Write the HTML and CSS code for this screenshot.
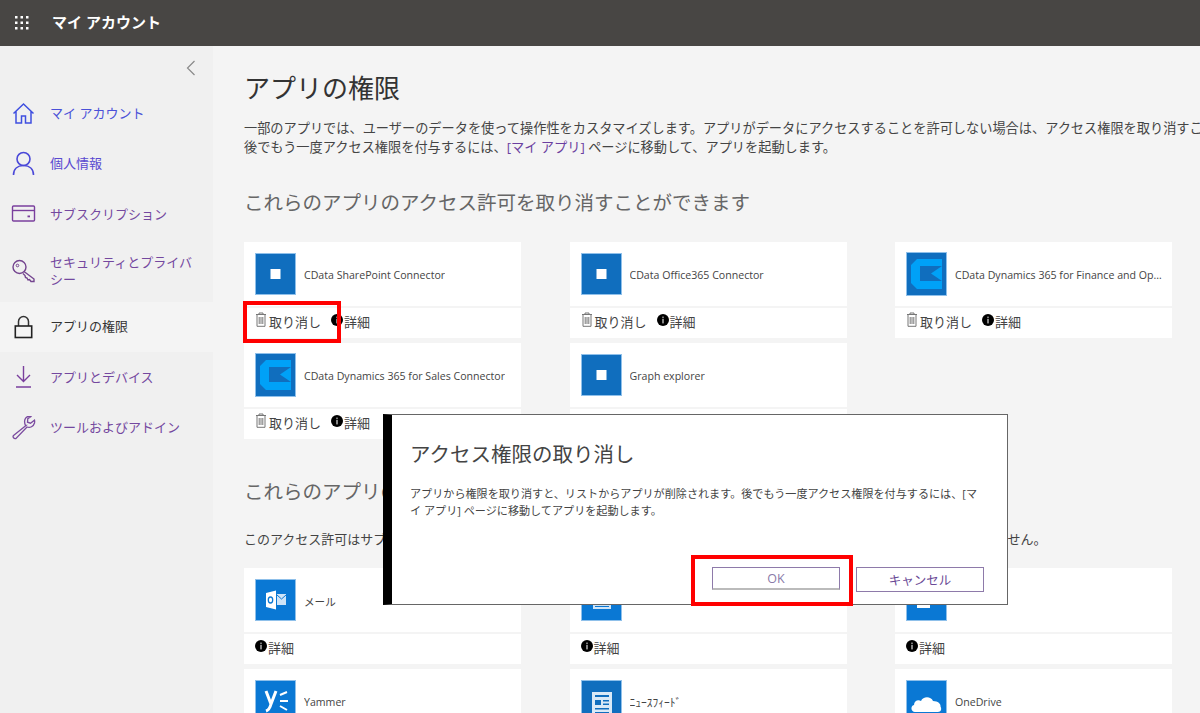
FILE: index.html
```html
<!DOCTYPE html>
<html lang="ja">
<head>
<meta charset="utf-8">
<title>アプリの権限</title>
<link rel="stylesheet" href="styles.css">
</head>
<body>
<svg class="defs" width="0" height="0" aria-hidden="true">
  <symbol id="trash" viewBox="0 0 11 15"><path d="M3.500 2.200V1h4v1.200M.5 2.500h10M1.500 2.500v11.800h8V2.500M3.700 5v7M5.500 5v7M7.300 5v7" fill="none" stroke="#777" stroke-width="1"/></symbol>
  <symbol id="info" viewBox="0 0 12 12"><circle cx="6" cy="6" r="6" fill="#000"/><rect x="5.400" y="2.600" width="1.200" height="1.300" fill="#ddd"/><rect x="5.400" y="4.800" width="1.200" height="4.600" fill="#ddd"/></symbol>
  <symbol id="square" viewBox="0 0 41 42"><rect width="41" height="42" fill="#106ebe"/><rect x="15.500" y="16" width="10" height="10" fill="#fff"/></symbol>
  <symbol id="cdata" viewBox="0 0 41 44"><rect width="41" height="44" fill="#106ebe"/><path d="M11 7H36V14H14V29H36V37H11L5 31V13Z" fill="#00a1f7"/><path d="M36 14V29L25 21.500Z" fill="#00a1f7"/></symbol>
</svg>
<header class="topbar">
  <svg class="waffle" width="16" height="16" viewBox="0 0 16 16"><g fill="#fff"><rect x="1" y="1" width="2.500" height="2.500"/><rect x="6.500" y="1" width="2.500" height="2.500"/><rect x="12" y="1" width="2.500" height="2.500"/><rect x="1" y="6.500" width="2.500" height="2.500"/><rect x="6.500" y="6.500" width="2.500" height="2.500"/><rect x="12" y="6.500" width="2.500" height="2.500"/><rect x="1" y="12" width="2.500" height="2.500"/><rect x="6.500" y="12" width="2.500" height="2.500"/><rect x="12" y="12" width="2.500" height="2.500"/></g></svg>
  <span class="brand">マイ アカウント</span>
</header>
<div class="shell">
  <nav class="sidebar">
    <div class="collapse"><svg width="10" height="16" viewBox="0 0 10 16"><path d="M8.500 1L1.500 8l7 7" fill="none" stroke="#8a8a8a" stroke-width="1.200"/></svg></div>
    <a class="nav-item c-blue"><svg class="nav-icon" width="24" height="24" viewBox="0 0 24 24"><path d="M2 12.500L12 3l10 9.500M4.500 10.500V22h5.500v-7h4v7h5.500V10.500" fill="none" stroke="#3f4fe0" stroke-width="1.500"/></svg><span>マイ アカウント</span></a>
    <a class="nav-item c-indigo"><svg class="nav-icon" width="24" height="26" viewBox="0 0 24 26"><circle cx="12" cy="8" r="6.500" fill="none" stroke="#4a48d8" stroke-width="1.600"/><path d="M2 24c0-6 4-9.500 10-9.500s10 3.500 10 9.500" fill="none" stroke="#4a48d8" stroke-width="1.600"/></svg><span>個人情報</span></a>
    <a class="nav-item c-purple"><svg class="nav-icon" width="24" height="18" viewBox="0 0 24 18"><rect x="1" y="1" width="22" height="15" rx="1" fill="none" stroke="#7a3f9d" stroke-width="1.400"/><path d="M1 5.500h22" stroke="#7a3f9d" stroke-width="1.400"/><rect x="16" y="10.500" width="2.500" height="1.800" fill="#7a3f9d"/></svg><span>サブスクリプション</span></a>
    <a class="nav-item nav-tall c-purple"><svg class="nav-icon" width="24" height="24" viewBox="0 0 24 24"><circle cx="8" cy="8" r="6.500" fill="none" stroke="#74448f" stroke-width="1.400"/><circle cx="6" cy="6.500" r="1.300" fill="none" stroke="#74448f" stroke-width="1"/><path d="M12.500 12.500L22.500 20v2.500h-3l-1.500-2-1.500.5-1-2-1.500-.5-.5-2-2-2" fill="none" stroke="#74448f" stroke-width="1.400"/></svg><span>セキュリティとプライバシー</span></a>
    <a class="nav-item nav-active"><svg class="nav-icon" width="24" height="24" viewBox="0 0 24 24"><path d="M7 11V6.500a5 5 0 0110 0V11" fill="none" stroke="#333" stroke-width="1.500"/><rect x="3.800" y="11" width="16.400" height="11.500" fill="none" stroke="#222" stroke-width="1.600"/></svg><span>アプリの権限</span></a>
    <a class="nav-item c-purple"><svg class="nav-icon" width="24" height="24" viewBox="0 0 24 24"><path d="M12 1v15M5.500 10l6.500 6.500 6.500-6.500M4.500 22h15" fill="none" stroke="#7a3f9d" stroke-width="1.400"/></svg><span>アプリとデバイス</span></a>
    <a class="nav-item c-purple"><svg class="nav-icon" width="24" height="24" viewBox="0 0 24 24"><path d="M14.500 9.500L2 19.500c-1 1 0 3.500 2.500 3l11-11.500c3 1.200 6.500-.5 7.500-4 .2-1 .2-2 0-2.800l-4 3-3-1 .3-3.500 3-2c-4-1.500-8 2.500-5.300 8.800z" fill="none" stroke="#7a4a9f" stroke-width="1.300"/></svg><span>ツールおよびアドイン</span></a>
  </nav>
  <main class="content">
    <h1 class="page-title">アプリの権限</h1>
    <p class="intro">一部のアプリでは、ユーザーのデータを使って操作性をカスタマイズします。アプリがデータにアクセスすることを許可しない場合は、アクセス権限を取り消すことができます。<br>後でもう一度アクセス権限を付与するには、<a class="link">[マイ アプリ]</a> ページに移動して、アプリを起動します。</p>
    <h2 class="section-title">これらのアプリのアクセス許可を取り消すことができます</h2>
    <div class="card-grid">
      <article class="card"><div class="card-head"><svg class="app-icon"><use href="#square"/></svg><span class="app-name">CData SharePoint Connector</span></div><div class="card-foot"><span class="act"><svg class="ic-trash"><use href="#trash"/></svg>取り消し</span><span class="act"><svg class="ic-info"><use href="#info"/></svg>詳細</span></div></article>
      <article class="card"><div class="card-head"><svg class="app-icon"><use href="#square"/></svg><span class="app-name">CData Office365 Connector</span></div><div class="card-foot"><span class="act"><svg class="ic-trash"><use href="#trash"/></svg>取り消し</span><span class="act"><svg class="ic-info"><use href="#info"/></svg>詳細</span></div></article>
      <article class="card"><div class="card-head"><svg class="app-icon tall"><use href="#cdata"/></svg><span class="app-name">CData Dynamics 365 for Finance and Operations Connector</span></div><div class="card-foot"><span class="act"><svg class="ic-trash"><use href="#trash"/></svg>取り消し</span><span class="act"><svg class="ic-info"><use href="#info"/></svg>詳細</span></div></article>
      <article class="card"><div class="card-head"><svg class="app-icon tall"><use href="#cdata"/></svg><span class="app-name">CData Dynamics 365 for Sales Connector</span></div><div class="card-foot"><span class="act"><svg class="ic-trash"><use href="#trash"/></svg>取り消し</span><span class="act"><svg class="ic-info"><use href="#info"/></svg>詳細</span></div></article>
      <article class="card"><div class="card-head"><svg class="app-icon"><use href="#square"/></svg><span class="app-name">Graph explorer</span></div><div class="card-foot"></div></article>
    </div>
    <h2 class="section-title second">これらのアプリのアクセス許可は取り消せません</h2>
    <p class="note">このアクセス許可はサブスクリプションの一部として、組織の管理者によって提供されているため、ここでは取り消すことはできません。</p>
    <div class="card-grid">
      <article class="card"><div class="card-head"><svg class="app-icon" viewBox="0 0 41 42"><rect width="41" height="42" fill="#0a78d4"/><path d="M11 14l10-2.500v19L11 28z" fill="#fff"/><path d="M22 15h9v11h-9z" fill="#cfe4f7"/><path d="M22 16l4.500 4 4.500-4" fill="none" stroke="#0a78d4"/><ellipse cx="15.500" cy="21" rx="2.200" ry="3" fill="none" stroke="#0a78d4" stroke-width="1.300"/></svg><span class="app-name">メール</span></div><div class="card-foot"><span class="act"><svg class="ic-info"><use href="#info"/></svg>詳細</span></div></article>
      <article class="card"><div class="card-head"><svg class="app-icon" viewBox="0 0 41 42"><rect width="41" height="42" fill="#0a78d4"/><rect x="12" y="12" width="18" height="18" fill="#cfe4f7"/><path d="M14 27.500h14" stroke="#0a78d4"/></svg></div><div class="card-foot"><span class="act"><svg class="ic-info"><use href="#info"/></svg>詳細</span></div></article>
      <article class="card"><div class="card-head"><svg class="app-icon" viewBox="0 0 41 42"><rect width="41" height="42" fill="#0a78d4"/><rect x="11" y="12" width="13" height="17" fill="#fff"/></svg></div><div class="card-foot"><span class="act"><svg class="ic-info"><use href="#info"/></svg>詳細</span></div></article>
      <article class="card"><div class="card-head"><svg class="app-icon" viewBox="0 0 41 42"><rect width="41" height="42" fill="#0a78d4"/><path d="M11 11l5 13 5-13M16 24c-1 4-2 6-5 7" fill="none" stroke="#fff" stroke-width="3"/><path d="M25 15l7-3M25 21h8M25 26l7 4" stroke="#fff" stroke-width="2"/></svg><span class="app-name">Yammer</span></div></article>
      <article class="card"><div class="card-head"><svg class="app-icon" viewBox="0 0 41 42"><rect width="41" height="42" fill="#106ebe"/><rect x="11" y="12" width="20" height="24" fill="#d9e9f7"/><path d="M14 15h14v2H14zM14 20h6v5h-6zM22 20h6v1.500h-6zM22 23.500h6V25h-6zM14 28h14v1.500H14zM14 32h14v1.500H14z" fill="#106ebe"/></svg><span class="app-name news">ﾆｭｰｽﾌｨｰﾄﾞ</span></div></article>
      <article class="card"><div class="card-head"><svg class="app-icon" viewBox="0 0 41 42"><rect width="41" height="42" fill="#0a78d4"/><path d="M16 32H9c-4 0-5-6-1-7 0-4 4-6 7-4 2-5 10-5 12 0 5 0 8 3 7.500 5.500C36 29 35 32 32 32z" fill="#fff"/></svg><span class="app-name">OneDrive</span></div></article>
    </div>
  </main>
</div>
<section class="dialog" role="dialog">
  <h3 class="dialog-title">アクセス権限の取り消し</h3>
  <p class="dialog-text">アプリから権限を取り消すと、リストからアプリが削除されます。後でもう一度アクセス権限を付与するには、[マイ アプリ] ページに移動してアプリを起動します。</p>
  <div class="dialog-actions">
    <button class="btn btn-ok">OK</button>
    <button class="btn">キャンセル</button>
  </div>
</section>
<div class="mark mark-revoke"></div>
<div class="mark mark-ok"></div>
</body>
</html>
```

FILE: styles.css
```css
* { box-sizing: border-box; }
html, body { margin: 0; height: 100%; }
body {
  width: 1200px;
  height: 713px;
  overflow: hidden;
  position: relative;
  background: #f4f4f4;
  color: #333;
  font-family: "Open Sans", "Noto Sans CJK JP", sans-serif;
  font-size: 12px;
}
.defs { position: absolute; }
.topbar {
  height: 46px;
  background: #484644;
  color: #fff;
  display: flex;
  align-items: center;
  padding-left: 14px;
}
.waffle { flex: none; }
.brand { margin: 0 0 3px 22px; font-size: 15px; font-weight: 700; }
.shell { display: flex; height: 667px; }
.sidebar { width: 213px; flex: none; background: #f0f0f0; display: flex; flex-direction: column; }
.collapse { height: 42px; padding: 14px 0 0 186px; line-height: 0; }
.nav-item {
  height: 50.500px;
  display: flex;
  align-items: center;
  gap: 14px;
  padding: 0 14px 0 11px;
  font-size: 13px;
  line-height: 17px;
  color: #333;
}
.nav-item span { flex: 1; }
.nav-icon { flex: none; width: 25px; }
.nav-tall { height: 62px; }
.nav-active { background: #f4f4f4; }
.c-blue { color: #4a50d8; }
.c-indigo { color: #5a4ad0; }
.c-purple { color: #74489f; }
.content { flex: 1; min-width: 0; padding: 24px 0 0 31px; overflow: hidden; }
.page-title { margin: 0; font-size: 26px; font-weight: 400; line-height: 36px; color: #333; white-space: nowrap; }
.intro { margin: 13px 0 0; width: 1000px; font-size: 13.200px; line-height: 19px; color: #444; white-space: nowrap; }
.link { color: #6b3fa0; }
.section-title { margin: 32px 0 0; font-size: 19.500px; font-weight: 400; line-height: 28px; color: #666; white-space: nowrap; }
.section-title.second { margin-top: 0; padding-top: 39px; }
.note { margin: 23px 0 0; font-size: 13px; line-height: 20px; color: #444; white-space: nowrap; }
.card-grid {
  display: grid;
  grid-template-columns: repeat(3, 277px);
  column-gap: 48.500px;
  row-gap: 5px;
  margin-top: 25px;
}
.section-title + .card-grid { margin-top: 25px; }
.note + .card-grid { margin-top: 19px; }
.card { display: flex; flex-direction: column; gap: 2px; height: 96px; }
.card-head { height: 64px; background: #fff; display: flex; align-items: center; padding: 0 8px 0 11px; gap: 8px; }
.app-icon { width: 41px; height: 42px; flex: none; outline: 1px solid #8fc0ea; outline-offset: -1px; }
.app-icon.tall { height: 44px; }
.app-name { margin-top: 2px; font-size: 10.600px; color: #444; white-space: nowrap; overflow: hidden; text-overflow: ellipsis; min-width: 0; }
.news { font-size: 11.500px; }
.card-foot { height: 30px; background: #fff; display: flex; align-items: center; gap: 10px; padding: 0 11px 4px; }
.act { display: inline-flex; align-items: center; font-size: 13px; color: #444; }
.ic-trash { width: 12px; height: 15px; margin: -3px 2px 0 0; }
.ic-info { width: 12px; height: 12px; margin: -3px 1px 0 0; }
.dialog {
  position: absolute;
  left: 383px;
  top: 414px;
  width: 625px;
  height: 191px;
  background: #fff;
  border: 1px solid #666;
  border-left: 9px solid #000;
  padding: 25px 18px 0;
}
.dialog-title { margin: 0; font-size: 20.500px; font-weight: 400; line-height: 28px; color: #444; }
.dialog-text { margin: 17px 0 0; max-width: 574px; font-size: 11.100px; line-height: 17px; color: #444; }
.dialog-actions { position: absolute; right: 23px; top: 152px; display: flex; gap: 16px; }
.btn {
  width: 128px;
  height: 25px;
  background: #fff;
  border: 1px solid #8e7aaa;
  font: inherit;
  font-size: 12.500px;
  color: #6a4a96;
  padding: 0;
}
.btn-ok { height: 23px; color: #8a7aa8; border-bottom: 2px solid #bbb; }
.mark { position: absolute; border: 4px solid #f00; }
.mark-revoke { left: 243px; top: 301px; width: 98px; height: 42px; }
.mark-ok { left: 691px; top: 555px; width: 162px; height: 51px; }
```
